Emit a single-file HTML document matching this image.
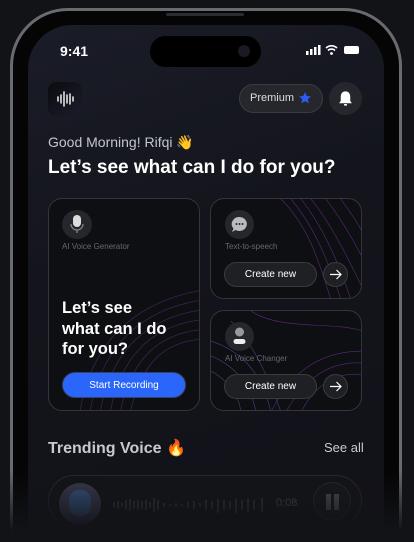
<!DOCTYPE html>
<html><head><meta charset="utf-8"><style>
*{margin:0;padding:0;box-sizing:border-box}
html,body{width:414px;height:542px;overflow:hidden}
body{background:#121317;font-family:"Liberation Sans",sans-serif;position:relative}
.a{position:absolute}
.frame{left:10px;top:8px;width:392px;height:534px;border-radius:58px 58px 0 0;background:#050506;border:3px solid #6a6b70;border-bottom:none}
.scr{left:28px;top:25px;width:356px;height:517px;border-radius:44px 44px 0 0;background:linear-gradient(160deg,#1a1c28 0%,#14151c 40%,#111218 100%);overflow:hidden}
.t{color:#fff;white-space:nowrap}
.card{border:1px solid #34353b;border-radius:14px;background:#0e0f13;overflow:hidden}
.circ{border-radius:50%;background:#26272c}
.pill{border-radius:14px;background:#1f2024;border:1px solid #3a3b40;color:#fff;font-size:10px;display:flex;align-items:center;justify-content:center}
.lbl{font-size:8px;color:#666870}
.fade{left:0;top:470px;width:414px;height:72px;background:linear-gradient(180deg,rgba(18,19,23,0) 0%,rgba(18,19,23,.6) 50%,#121317 85%)}
</style></head><body>
<div class="a frame"></div>
<div class="a" style="left:166px;top:13px;width:78px;height:3px;background:#2b2c30;border-radius:2px"></div>
<div class="a scr"></div>
<div class="a t" style="left:60px;top:43px;font-size:14px;font-weight:bold">9:41</div>
<div class="a" style="left:150px;top:36px;width:111px;height:31px;border-radius:16px;background:#000"></div>
<div class="a" style="left:238px;top:45px;width:12px;height:12px;border-radius:50%;background:#1a1b22"></div>
<svg class="a" style="left:306px;top:44px" width="54" height="12" viewBox="0 0 54 12"><rect x="0" y="7" width="2.5" height="4" fill="#fff"/><rect x="4" y="5" width="2.5" height="6" fill="#fff"/><rect x="8" y="3" width="2.5" height="8" fill="#fff"/><rect x="12" y="1" width="2.5" height="10" fill="#fff"/><path d="M20 4a8 8 0 0 1 11 0M22 6.5a5 5 0 0 1 7 0" stroke="#fff" stroke-width="1.6" fill="none"/><circle cx="25.5" cy="9.5" r="1.4" fill="#fff"/><rect x="38" y="2" width="15" height="8" rx="2" fill="#fff"/></svg>
<div class="a" style="left:48px;top:82px;width:34px;height:34px;border-radius:8px;background:linear-gradient(135deg,#0b0b10,#1b1c2a)"></div>
<svg class="a" style="left:56px;top:90px" width="18" height="18" viewBox="0 0 18 18" stroke="#fff" stroke-width="1.4" stroke-linecap="round"><path d="M2 7v4M5 5v8M8 2v14M11 5v8M14 4v10M17 7v4"/></svg>
<div class="a" style="left:239px;top:84px;width:84px;height:29px;border-radius:15px;background:#26272d;border:1px solid #3a3b42"></div>
<div class="a t" style="left:250px;top:92px;font-size:11px;color:#ddd">Premium</div>
<svg class="a" style="left:298px;top:91px" width="14" height="14" viewBox="0 0 24 24"><path d="M12 2l3 6.5 7 .8-5.2 4.8 1.5 7L12 17.5 5.7 21l1.5-7L2 9.3l7-.8z" fill="#2f5cf0"/></svg>
<div class="a circ" style="left:329px;top:82px;width:33px;height:33px"></div>
<svg class="a" style="left:336px;top:89px" width="19" height="19" viewBox="0 0 24 24"><path d="M12 3c-4 0-6 3-6 7v5l-2 3h16l-2-3v-5c0-4-2-7-6-7z" fill="#fff"/><rect x="10" y="19" width="4" height="2" rx="1" fill="#fff"/></svg>
<div class="a t" style="left:48px;top:134px;font-size:14px;color:#c4c5ca">Good Morning! Rifqi 👋</div>
<div class="a t" style="left:48px;top:157px;font-size:19px;font-weight:bold">Let’s see what can I do for you?</div>

<div class="a card" style="left:48px;top:198px;width:152px;height:213px">
<svg class="a" style="left:20px;top:20px" width="140" height="200" viewBox="0 0 140 200" fill="none" stroke="#5a2a78" stroke-width=".6" opacity=".8"><path d="M10 200C20 120 70 80 140 70M20 200C30 125 75 88 140 80M30 200C40 130 80 96 140 90M40 200C50 135 85 104 140 100M50 200C60 140 90 112 140 110M60 200C70 145 95 120 140 120"/></svg>
</div>
<div class="a circ" style="left:62px;top:210px;width:30px;height:29px"></div>
<svg class="a" style="left:70px;top:214px" width="14" height="20" viewBox="0 0 14 20"><rect x="3" y="1" width="8" height="12" rx="4" fill="#ddd"/><path d="M1 10a6 6 0 0 0 12 0M7 16v3" stroke="#888" stroke-width="1.2" fill="none"/></svg>
<div class="a lbl" style="left:62px;top:242px">AI Voice Generator</div>
<div class="a t" style="left:62px;top:298px;font-size:16.5px;font-weight:bold;line-height:20.5px">Let’s see<br>what can I do<br>for you?</div>
<div class="a" style="left:62px;top:372px;width:124px;height:26px;border-radius:13px;background:#2b66fa;border:1px solid #3a4160;color:#fff;font-size:10px;display:flex;align-items:center;justify-content:center">Start Recording</div>

<div class="a card" style="left:210px;top:198px;width:152px;height:101px">
<svg class="a" style="left:60px;top:0" width="92" height="101" viewBox="0 0 92 101" fill="none" stroke="#5a2a78" stroke-width=".6"><path d="M10 0C40 30 50 70 60 101M20 0C45 30 58 65 70 101M30 0C52 28 66 60 80 101M40 0C60 25 75 55 92 90M55 0C70 20 82 40 92 60M70 0C80 15 88 25 92 35"/></svg>
</div>
<div class="a circ" style="left:225px;top:210px;width:29px;height:29px"></div>
<svg class="a" style="left:231px;top:216px" width="17" height="17" viewBox="0 0 17 17"><path d="M8.5 1a7.5 7 0 1 1-4 13L1 16l1.5-3.5A7.5 7 0 0 1 8.5 1z" fill="#bbb"/><circle cx="5.5" cy="8" r="1" fill="#26272c"/><circle cx="8.5" cy="8" r="1" fill="#26272c"/><circle cx="11.5" cy="8" r="1" fill="#26272c"/></svg>
<div class="a lbl" style="left:225px;top:242px">Text-to-speech</div>
<div class="a pill" style="left:224px;top:262px;width:93px;height:25px">Create new</div>
<div class="a circ" style="left:323px;top:262px;width:25px;height:25px;background:#1f2024;border:1px solid #3a3b40"></div>
<svg class="a" style="left:329px;top:268px" width="13" height="13" viewBox="0 0 13 13" stroke="#fff" stroke-width="1.2" fill="none"><path d="M1 6.5h11M7.5 2l4.5 4.5L7.5 11"/></svg>

<div class="a card" style="left:210px;top:310px;width:152px;height:101px">
<svg class="a" style="left:0;top:0" width="152" height="101" viewBox="0 0 152 101" fill="none" stroke-width=".6"><g stroke="#3a4a78"><path d="M0 30C30 40 50 60 60 101M0 45C25 55 40 75 45 101M0 60C18 70 28 85 30 101M20 10C40 30 55 60 70 101"/></g><g stroke="#5a2a78"><path d="M60 101C80 60 110 40 152 40M75 101C95 65 120 50 152 52M90 101C105 72 128 60 152 64M40 0C70 20 120 10 152 20"/></g></svg>
</div>
<div class="a circ" style="left:225px;top:322px;width:29px;height:29px"></div>
<svg class="a" style="left:232px;top:326px" width="15" height="20" viewBox="0 0 15 20"><circle cx="7.5" cy="6" r="4.5" fill="#999"/><rect x="1.5" y="13" width="12" height="5" rx="2.5" fill="#eee"/></svg>
<div class="a lbl" style="left:225px;top:354px">AI Voice Changer</div>
<div class="a pill" style="left:224px;top:374px;width:93px;height:25px">Create new</div>
<div class="a circ" style="left:323px;top:374px;width:25px;height:25px;background:#1f2024;border:1px solid #3a3b40"></div>
<svg class="a" style="left:329px;top:380px" width="13" height="13" viewBox="0 0 13 13" stroke="#fff" stroke-width="1.2" fill="none"><path d="M1 6.5h11M7.5 2l4.5 4.5L7.5 11"/></svg>

<div class="a t" style="left:48px;top:438px;font-size:16px;font-weight:bold;color:#c9cace">Trending Voice 🔥</div>
<div class="a t" style="left:324px;top:440px;font-size:13px;color:#c9cace">See all</div>
<div class="a" style="left:48px;top:475px;width:314px;height:52px;border-radius:26px;border:1px solid #2a2b30;background:#131419"></div>
<div class="a" style="left:59px;top:483px;width:42px;height:42px;border-radius:50%;background:#3b3d52"></div>
<div class="a" style="left:69px;top:490px;width:22px;height:26px;border-radius:10px;background:#3a5a8a"></div>
<svg class="a" style="left:112px;top:497px" width="156" height="16" viewBox="0 0 156 16" stroke="#4a4b52" stroke-width="1.2"><path d="M2 5v6M6 4v8M10 6v4M14 3v10M18 2v12M22 4v8M26 3v10M30 4v8M34 3v10M38 5v6M42 1v14M46 3v10M52 6v4M58 7v2M64 6v4M70 7v2M76 5v6M82 4v8M88 6v4M94 3v10M100 4v8M106 2v14M112 3v10M118 4v8M124 2v14M130 3v10M136 2v14M142 3v10M150 1v14"/></svg>
<div class="a t" style="left:276px;top:497px;font-size:11px;color:#55565c">0:08</div>
<div class="a" style="left:313px;top:482px;width:38px;height:38px;border-radius:50%;border:1px solid #2a2b30;background:#17181d"></div>
<div class="a" style="left:326px;top:494px;width:5px;height:16px;background:#55565c"></div>
<div class="a" style="left:334px;top:494px;width:5px;height:16px;background:#55565c"></div>
<div class="a fade"></div>
</body></html>
